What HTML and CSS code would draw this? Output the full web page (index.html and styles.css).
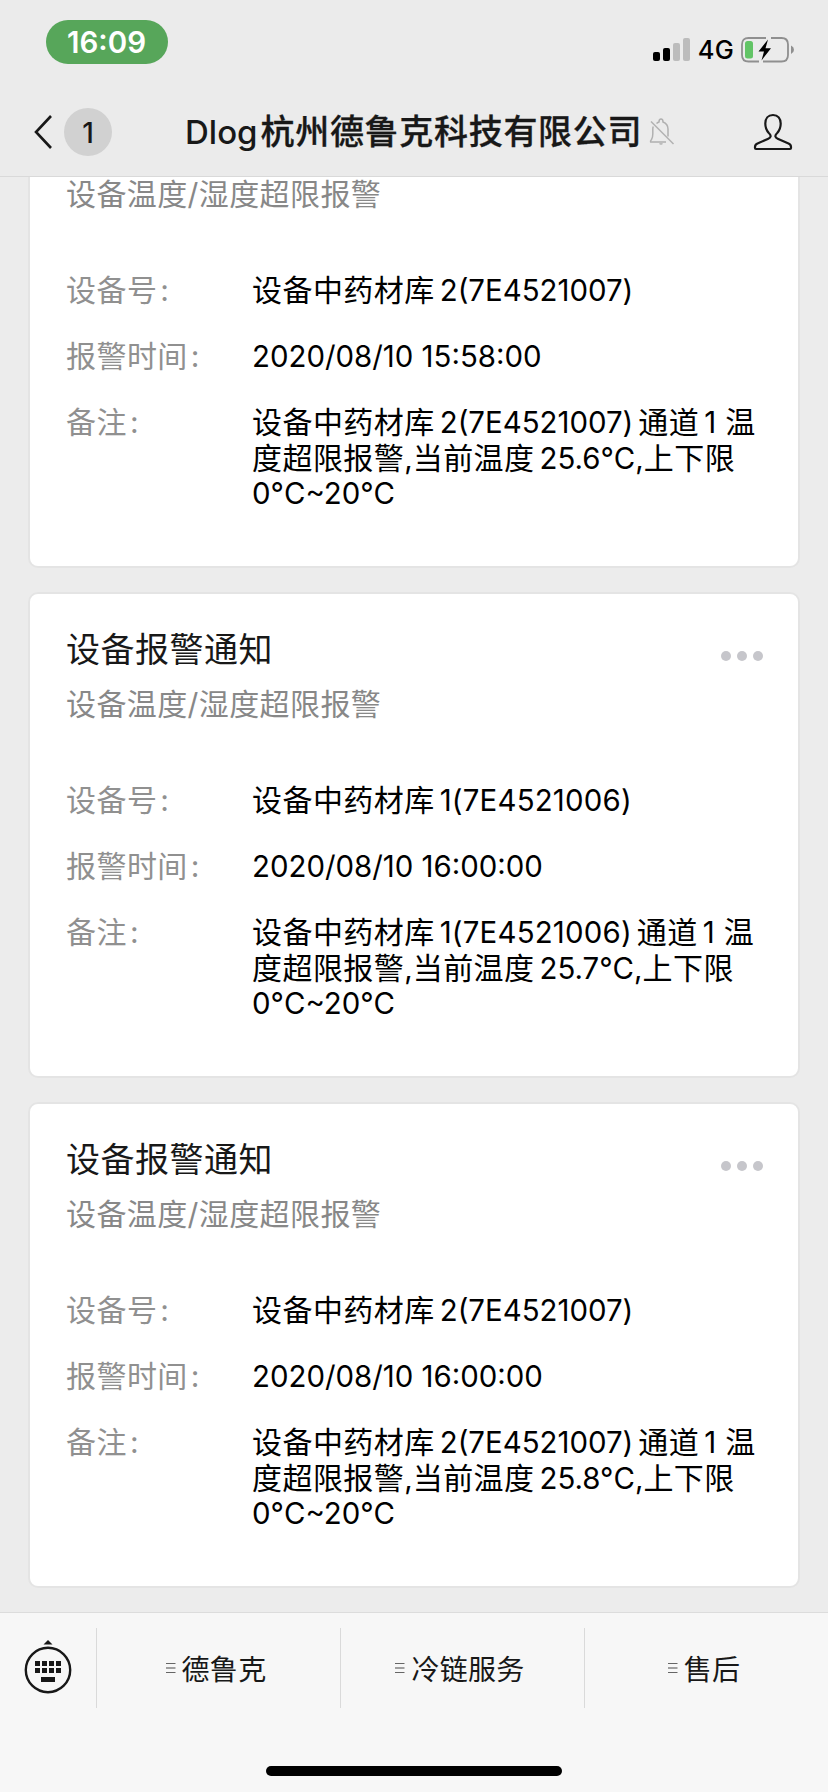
FILE: index.html
```
<!DOCTYPE html>
<html lang="zh-CN">
  <head>
    <meta charset="UTF-8" />
    <meta name="viewport" content="width=device-width, initial-scale=1.0" />
    <title>Dlog杭州德鲁克科技有限公司</title>
    <link rel="stylesheet" href="styles.css">
  </head>
  <body>
    <div class="header">
      <div class="status-bar">
        <span class="time">16:09</span>
        <div class="status-icons">
          <svg class="signal" width="38" height="24" viewBox="0 0 38 24">
            <rect x="0" y="14" width="7" height="9" rx="2" fill="#000" />
            <rect x="10" y="10" width="7" height="13" rx="2" fill="#000" />
            <rect x="20" y="5" width="7" height="18" rx="2" fill="#bcbcbc" />
            <rect x="30" y="0" width="7" height="23" rx="2" fill="#bcbcbc" />
          </svg>
          <span class="network">4G</span>
          <svg class="battery" width="54" height="26" viewBox="0 0 54 26">
            <path d="M25 1H7.500Q1 1 1 7.500V18Q1 24.500 7.500 24.500H18M30 1H40.500Q47 1 47 7.500V18Q47 24.500 40.500 24.500H22" fill="none" stroke="#8f8f8f" stroke-width="1.800" />
            <rect x="4" y="4" width="8" height="17.500" rx="2.500" fill="#62c466" />
            <path d="M27 2.500L17.500 14.500H23L20.500 23.500L30 11.300H24.500Z" fill="#000" />
            <path d="M50 8.500Q53 10 53 12.800T50 17Z" fill="#8f8f8f" />
          </svg>
        </div>
      </div>
      <div class="nav-bar">
        <svg class="back" width="20" height="36" viewBox="0 0 20 36">
          <path d="M17 2L2 18L17 34" fill="none" stroke="#181818" stroke-width="2.600" />
        </svg>
        <span class="badge">1</span>
        <div class="title"><span class="title-en">Dlog</span>杭州德鲁克科技有限公司</div>
        <svg class="bell" width="26" height="28" viewBox="0 0 26 28">
          <path d="M7.500 5.500Q9 4.200 10 4Q10 1 12 1Q14 1 14 4Q19 6 19 11V18.500M17 24H1.500Q1 23.500 2.500 21.500Q3.800 19.500 3.800 16V11Q3.800 9.500 4.300 8.500M10.500 25.500Q12 26.500 13.500 25.500" fill="none" stroke="#b0b0b0" stroke-width="1.500" />
          <path d="M2 3.500L24.500 26" stroke="#b0b0b0" stroke-width="1.500" />
        </svg>
        <svg class="person" width="40" height="38" viewBox="0 0 40 38">
          <path d="M20 2C15 2 12.300 5.500 12.300 10.500C12.300 14.500 13.500 17.500 15.800 20C18.600 22.500 18 24.500 15.300 25.700L4.500 30.500Q2 31.700 2 34V35Q2 36 3 36H37Q38 36 38 35V34Q38 31.700 35.500 30.500L24.700 25.700C22 24.500 21.400 22.500 24.200 20C26.500 17.500 27.700 14.500 27.700 10.500C27.700 5.500 25 2 20 2Z" fill="none" stroke="#181818" stroke-width="2.200" stroke-linejoin="round" />
        </svg>
      </div>
    </div>

    <div class="messages">
      <div class="card">
        <div class="card-subtitle">设备温度/湿度超限报警</div>
        <div class="row">
          <div class="label">设备号<i>:</i></div>
          <div class="value">设备中药材库<b class="after">2(7E4521007)</b></div>
        </div>
        <div class="row">
          <div class="label">报警时间<i>:</i></div>
          <div class="value"><b>2020/08/10 15:58:00</b></div>
        </div>
        <div class="row">
          <div class="label">备注<i>:</i></div>
          <div class="value">设备中药材库<b class="mid">2(7E4521007)</b>通道<b class="one">1</b>温<br />度超限报警<b>,</b>当前温度<b class="after">25.6°C,</b>上下限<br /><b>0°C~20°C</b></div>
        </div>
      </div>

      <div class="card">
        <div class="dots"><span></span><span></span><span></span></div>
        <div class="card-title">设备报警通知</div>
        <div class="card-subtitle">设备温度/湿度超限报警</div>
        <div class="row">
          <div class="label">设备号<i>:</i></div>
          <div class="value">设备中药材库<b class="after wide">1(7E4521006)</b></div>
        </div>
        <div class="row">
          <div class="label">报警时间<i>:</i></div>
          <div class="value"><b>2020/08/10 16:00:00</b></div>
        </div>
        <div class="row">
          <div class="label">备注<i>:</i></div>
          <div class="value">设备中药材库<b class="mid wide">1(7E4521006)</b>通道<b class="one">1</b>温<br />度超限报警<b>,</b>当前温度<b class="after">25.7°C,</b>上下限<br /><b>0°C~20°C</b></div>
        </div>
      </div>

      <div class="card">
        <div class="dots"><span></span><span></span><span></span></div>
        <div class="card-title">设备报警通知</div>
        <div class="card-subtitle">设备温度/湿度超限报警</div>
        <div class="row">
          <div class="label">设备号<i>:</i></div>
          <div class="value">设备中药材库<b class="after">2(7E4521007)</b></div>
        </div>
        <div class="row">
          <div class="label">报警时间<i>:</i></div>
          <div class="value"><b>2020/08/10 16:00:00</b></div>
        </div>
        <div class="row">
          <div class="label">备注<i>:</i></div>
          <div class="value">设备中药材库<b class="mid">2(7E4521007)</b>通道<b class="one">1</b>温<br />度超限报警<b>,</b>当前温度<b class="after">25.8°C,</b>上下限<br /><b>0°C~20°C</b></div>
        </div>
      </div>
    </div>

    <div class="footer">
      <div class="menu">
        <div class="keyboard">
          <svg width="48" height="56" viewBox="0 0 48 56">
            <path d="M19.500 6.500L24 2L28.500 6.500Z" fill="#181818" />
            <circle cx="24" cy="32" r="22.200" fill="none" stroke="#181818" stroke-width="2.400" />
            <path d="M11 23h5v5h-5zM18 23h5v5h-5zM25 23h5v5h-5zM32 23h5v5h-5zM11 30h5v5h-5zM18 30h5v5h-5zM25 30h5v5h-5zM32 30h5v5h-5zM17 39h14v5h-14z" fill="#181818" />
          </svg>
        </div>
        <div class="menu-item">
          <svg width="10" height="12" viewBox="0 0 10 12"><path d="M0 1.500H9.500M0 10.500H9.500" stroke="#666" /><path d="M0 6H9.500" stroke="#a0a0a0" stroke-width="2" /></svg>
          德鲁克
        </div>
        <div class="menu-item">
          <svg width="10" height="12" viewBox="0 0 10 12"><path d="M0 1.500H9.500M0 10.500H9.500" stroke="#666" /><path d="M0 6H9.500" stroke="#a0a0a0" stroke-width="2" /></svg>
          冷链服务
        </div>
        <div class="menu-item">
          <svg width="10" height="12" viewBox="0 0 10 12"><path d="M0 1.500H9.500M0 10.500H9.500" stroke="#666" /><path d="M0 6H9.500" stroke="#a0a0a0" stroke-width="2" /></svg>
          售后
        </div>
      </div>
      <div class="home-indicator"></div>
    </div>
  </body>
</html>
```
FILE: styles.css
```
* {
  box-sizing: border-box;
}
body {
  margin: 0;
  height: 1792px;
  display: flex;
  flex-direction: column;
  overflow: hidden;
  background-color: #ececec;
  font-family: Inter, "Noto Sans CJK SC", sans-serif;
}
svg {
  display: block;
  flex: none;
}
.header {
  flex: none;
  height: 177px;
  background-color: #ebebeb;
  border-bottom: 1px solid #d9d9d9;
}
.status-bar {
  height: 88px;
  padding: 20px 33px 0 46px;
  display: flex;
  justify-content: space-between;
  align-items: flex-start;
}
.time {
  width: 122px;
  height: 44px;
  padding-right: 1px;
  border-radius: 22px;
  background-color: #57a65a;
  color: #fff;
  font-size: 29.5px;
  font-weight: 600;
  line-height: 45px;
  text-align: center;
}
.status-icons {
  display: flex;
  padding-top: 17px;
}
.signal {
  margin-top: 1px;
}
.network {
  width: 50px;
  text-align: center;
  font-size: 25.5px;
  font-weight: 500;
  line-height: 26px;
  letter-spacing: 0.3px;
}
.nav-bar {
  height: 88px;
  display: flex;
  align-items: center;
  padding-left: 34px;
  color: #181818;
}
.badge {
  width: 48px;
  height: 48px;
  margin-left: 10px;
  border-radius: 50%;
  background-color: #d1d1d1;
  font-size: 28px;
  font-weight: 500;
  line-height: 50px;
  text-align: center;
}
.title {
  width: 462px;
  margin-left: 73px;
  font-size: 34px;
  font-weight: 500;
  letter-spacing: 0.7px;
  line-height: 50px;
  white-space: nowrap;
  -webkit-text-stroke: 0.3px #181818;
}
.title-en {
  font-size: 33px;
  letter-spacing: 0;
  margin-right: 3px;
  -webkit-text-stroke: 0;
}
.bell {
  margin-left: 2px;
}
.person {
  margin-left: 78px;
}
.messages {
  flex: 1;
  min-height: 0;
  overflow: hidden;
  display: flex;
  flex-direction: column;
  justify-content: flex-end;
  gap: 24px;
  padding: 0 28px 24px;
}
.card {
  flex: none;
  position: relative;
  display: flex;
  flex-direction: column;
  height: 486px;
  padding: 31px 36px 0;
  background-color: #fff;
  border: 2px solid #e4e4e4;
  border-radius: 10px;
}
/* the first card is scrolled under the header, only its visible part is laid out */
.card:first-child {
  height: 392px;
  padding-top: 0;
  border-top: 0;
  border-radius: 0 0 10px 10px;
}
.card:first-child .card-subtitle {
  margin-top: 0;
}
.card-title {
  flex: none;
  height: 48px;
  color: #181818;
  font-size: 34px;
  letter-spacing: 0.5px;
  line-height: 50px;
}
.card-subtitle {
  height: 36px;
  margin: 13px 0 60px;
  color: #888;
  font-size: 30px;
  letter-spacing: 0.4px;
  line-height: 36px;
}
.dots {
  position: absolute;
  top: 57px;
  right: 35px;
  display: flex;
  gap: 6px;
}
.dots span {
  width: 10px;
  height: 10px;
  border-radius: 50%;
  background-color: #c6c6cb;
}
.row {
  display: flex;
  margin-bottom: 30px;
  font-size: 30px;
  letter-spacing: 0.45px;
  line-height: 36px;
  white-space: nowrap;
}
.row:not(:last-child) {
  height: 36px;
}
.label {
  width: 186px;
  color: #909090;
}
.label i {
  margin-left: 3px;
  font-style: normal;
}
.value {
  padding-top: 1px;
  color: #000;
  line-height: 35.5px;
}
.value b {
  font-size: 29.4px;
  font-weight: 400;
  line-height: 0;
  letter-spacing: 0;
}
.value .after {
  margin-left: 5px;
}
.value .mid {
  margin: 0 5px;
}
.value .wide {
  letter-spacing: 0.2px;
}
.value .one {
  margin: 0 9px 0 5px;
}
.footer {
  flex: none;
  height: 180px;
  background-color: #f7f7f7;
  border-top: 1px solid #dcdcdc;
}
.menu {
  display: flex;
  height: 80px;
  margin-top: 15px;
}
.keyboard {
  width: 96px;
  padding: 10px 0 0 24px;
}
.menu-item {
  width: 244px;
  padding: 0 5px 1px 0;
  display: flex;
  align-items: center;
  justify-content: center;
  gap: 6px;
  border-left: 1px solid #dadada;
  color: #181818;
  font-size: 28px;
  letter-spacing: 0.3px;
}
.home-indicator {
  width: 296px;
  height: 10px;
  margin: 58px auto 0;
  border-radius: 5px;
  background-color: #000;
}
```
